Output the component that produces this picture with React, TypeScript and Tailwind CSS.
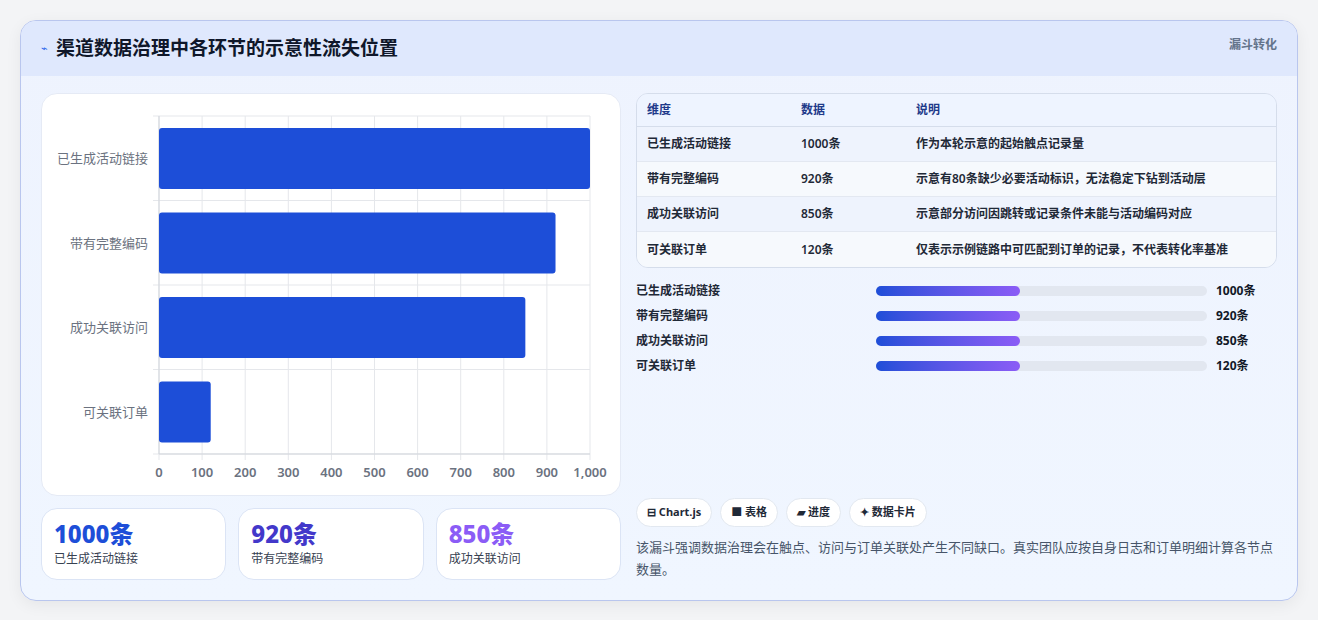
const rows = [
  { name: "已生成活动链接", v: 1000, note: "作为本轮示意的起始触点记录量" },
  { name: "带有完整编码", v: 920, note: "示意有80条缺少必要活动标识，无法稳定下钻到活动层" },
  { name: "成功关联访问", v: 850, note: "示意部分访问因跳转或记录条件未能与活动编码对应" },
  { name: "可关联订单", v: 120, note: "仅表示示例链路中可匹配到订单的记录，不代表转化率基准" },
]

function Chart() {
  const x0 = 117, x1 = 548, top = 22, bottom = 360
  const sx = (v: number) => x0 + ((x1 - x0) * v) / 1000
  const band = (bottom - top) / 4
  return (
    <svg width="580" height="402" className="block">
      {Array.from({ length: 11 }).map((_, i) => (
        <line key={i} x1={sx(i * 100)} x2={sx(i * 100)} y1={top} y2={bottom + 6} stroke="#e5e7eb" />
      ))}
      {[0, 1, 2, 3, 4].map((i) => (
        <line key={i} x1={x0 - 6} x2={x1} y1={top + band * i} y2={top + band * i} stroke="#e5e7eb" />
      ))}
      <line x1={x0} x2={x0} y1={top} y2={bottom} stroke="#d1d5db" />
      <line x1={x0} x2={x1} y1={bottom} y2={bottom} stroke="#d1d5db" />
      {rows.map((r, i) => (
        <g key={r.name}>
          <rect x={x0} y={top + band * i + 12} width={sx(r.v) - x0} height={61} rx={3} fill="#1d4ed8" />
          <text x={x0 - 11} y={top + band * i + band / 2 + 5} textAnchor="end" fontSize="13" fill="#6b7280" fontFamily="'Noto Sans CJK SC', sans-serif">{r.name}</text>
        </g>
      ))}
      {Array.from({ length: 11 }).map((_, i) => (
        <text key={i} x={sx(i * 100)} y={383} textAnchor="middle" fontSize="13" fontWeight="600" fill="#6b7280" fontFamily="'Noto Sans', sans-serif">{i === 10 ? "1,000" : i * 100}</text>
      ))}
    </svg>
  )
}

export default function App() {
  return (
    <div className="min-h-[620px] bg-[#f3f4f6] p-5 pb-5" style={{ fontFamily: "'Noto Sans', 'Noto Sans CJK SC', sans-serif" }}>
      <div className="overflow-hidden rounded-2xl border border-[#b9c6ee] bg-gradient-to-b from-[#eef3fe] to-[#f0f6ff] shadow-[0_4px_16px_rgba(0,0,0,0.06)]">
        <div className="flex h-[55px] items-start justify-between bg-[#dfe8fd] px-5">
          <div className="flex items-center gap-2 pt-[13px]">
            <span className="text-[11px] text-[#2563eb]">⌁</span>
            <span className="text-[19px] font-bold text-[#0f172a]">渠道数据治理中各环节的示意性流失位置</span>
          </div>
          <span className="pt-[15px] text-[12px] font-bold text-[#64748b]">漏斗转化</span>
        </div>
        <div className="flex gap-[15px] px-5 pb-5 pt-[17px]">
          <div className="flex w-[580px] flex-col gap-3">
            <div className="h-[403px] rounded-2xl border border-[#e5eaf5] bg-white">
              <Chart />
            </div>
            <div className="grid grid-cols-3 gap-3">
              {[
                ["1000条", "已生成活动链接", "text-[#1d4ed8]"],
                ["920条", "带有完整编码", "text-[#4338ca]"],
                ["850条", "成功关联访问", "text-[#8b5cf6]"],
              ].map(([v, l, c]) => (
                <div key={l} className="h-[72px] rounded-2xl border border-[#dbe4f5] bg-white px-3 pt-[9px]">
                  <div className={`text-[24px] font-extrabold leading-[32px] ${c}`}>{v}</div>
                  <div className="text-[12px] text-[#374151]">{l}</div>
                </div>
              ))}
            </div>
          </div>
          <div className="flex flex-1 flex-col">
            <div className="overflow-hidden rounded-xl border border-[#d5ddeb] text-[12px]">
              <div className="grid h-[33px] grid-cols-[154px_115px_1fr] items-center border-b border-[#d5ddeb] bg-[#eef4ff] px-[10px] font-bold text-[#1e3a8a]">
                <span>维度</span><span>数据</span><span>说明</span>
              </div>
              {rows.map((r, i) => (
                <div key={r.name} className={`grid h-[35px] grid-cols-[154px_115px_1fr] items-center px-[10px] font-semibold text-[#1f2937] ${i % 2 ? "bg-[#f6f9fd]" : "bg-[#eef3fd]"} ${i < 3 ? "border-b border-[#e3e8f1]" : ""}`}>
                  <span>{r.name}</span><span>{r.v}条</span><span>{r.note}</span>
                </div>
              ))}
            </div>
            <div className="mt-[10px] flex flex-col">
              {rows.map((r) => (
                <div key={r.name} className="flex h-[25px] items-center text-[12px] font-semibold text-[#1f2937]">
                  <span className="w-[240px]">{r.name}</span>
                  <div className="h-[10px] w-[331px] rounded-full bg-[#e2e7f0]">
                    <div className="h-full w-[144px] rounded-full bg-gradient-to-r from-[#1d4ed8] to-[#8b5cf6]" />
                  </div>
                  <span className="ml-[9px] font-bold text-[#111827]">{r.v}条</span>
                </div>
              ))}
            </div>
            <div className="mt-auto flex gap-[8px]">
              {["⊟ Chart.js", "■ 表格", "▰ 进度", "✦ 数据卡片"].map((t) => (
                <span key={t} className="flex h-[29px] items-center rounded-full border border-[#e2e8f0] bg-white px-[10px] text-[11px] font-bold text-[#1f2937]">{t}</span>
              ))}
            </div>
            <p className="mt-[9px] text-[13px] leading-[22px] text-[#475569]">该漏斗强调数据治理会在触点、访问与订单关联处产生不同缺口。真实团队应按自身日志和订单明细计算各节点数量。</p>
          </div>
        </div>
      </div>
    </div>
  )
}
